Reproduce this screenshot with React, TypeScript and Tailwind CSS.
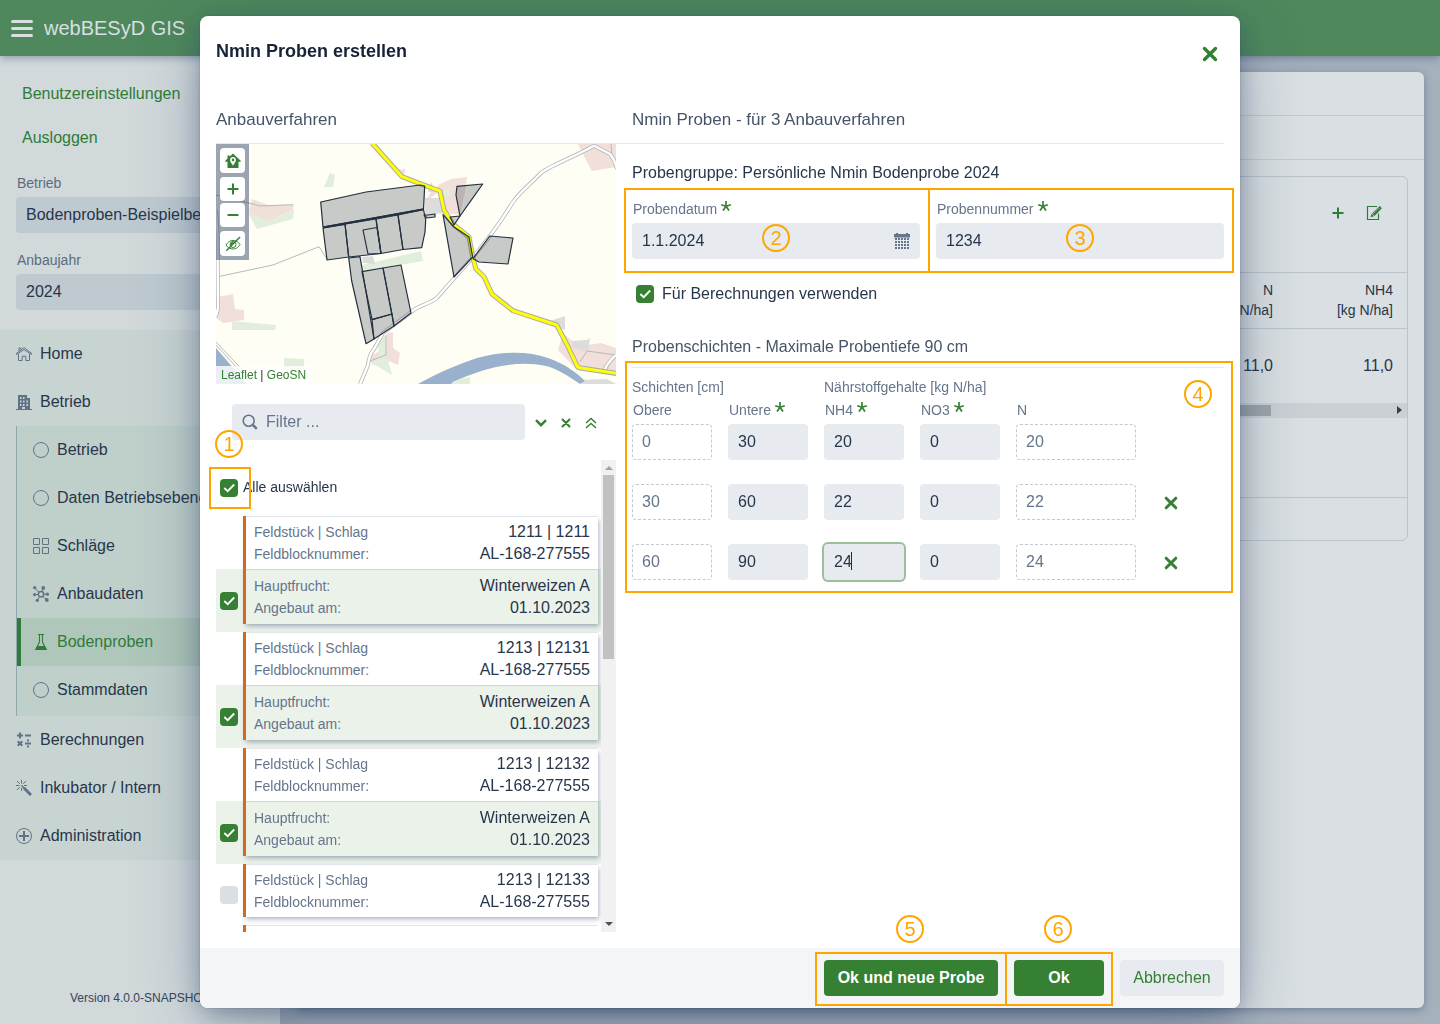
import React, { useState } from 'react';

type IconProps = { className?: string };

/* ---------- icons ---------- */

function CrossIcon({ className = '' }: IconProps) {
  return (
    <svg viewBox="0 0 16 16" className={className} fill="none" stroke="currentColor" strokeWidth="3.400" strokeLinecap="round">
      <path d="M2.500 2.500l11 11M13.500 2.500l-11 11" />
    </svg>
  );
}

function PlusIcon({ className = '' }: IconProps) {
  return (
    <svg viewBox="0 0 12 12" className={className} fill="currentColor">
      <path d="M5 0.5h2v4.500h4.500v2H7v4.500H5V7H0.500V5H5z" />
    </svg>
  );
}

function MinusIcon({ className = '' }: IconProps) {
  return (
    <svg viewBox="0 0 12 12" className={className} fill="currentColor">
      <path d="M0.500 5h11v2h-11z" />
    </svg>
  );
}

function HomeMarkerIcon({ className = '' }: IconProps) {
  return (
    <svg viewBox="0 0 16 16" className={className} fill="currentColor" fillRule="evenodd">
      <path d="M8 0.500l7.700 7.200v1h-2.200V15h-11V8.700H0.300v-1L2.500 5.600V2.500h2.200v1zM8 4a2.900 2.900 0 0 0-2.900 2.900C5.100 8.900 8 12.500 8 12.500s2.900-3.600 2.900-5.600A2.900 2.900 0 0 0 8 4zm0 1.600a1.300 1.300 0 1 1 0 2.600 1.300 1.300 0 0 1 0-2.600z" />
    </svg>
  );
}

function EyeSlashIcon({ className = '' }: IconProps) {
  return (
    <svg viewBox="0 0 16 16" className={className} fill="none" stroke="currentColor">
      <path d="M1 9c2-3.500 4.500-4.500 7-4.500s5 1 7 4c-2 3.500-4.500 4.500-7 4.500s-5-1-7-4z" />
      <path d="M8 5.500a3 3 0 1 0 0 6 3 3 0 0 0 0-6z" />
      <path d="M8.500 6a2.500 2.500 0 0 0-3 3.200c.2.700.6 1.100 1.100 1.300z" fill="currentColor" stroke="none" />
      <path d="M15 1L1.300 14.800" strokeWidth="1.400" />
    </svg>
  );
}

function HomeIcon() {
  return (
    <svg viewBox="0 0 16 16" className="size-4" fill="none" stroke="currentColor">
      <path d="M0.500 8.500V7.300L8 1.600l7.500 5.700v1.200L8 3.600z" />
      <path d="M3 5V2h1.800v1.500M2.500 8v6.500h3.700v-4.200h3.600v4.200h3.700V8" />
    </svg>
  );
}

function BuildingIcon() {
  return (
    <svg viewBox="0 0 16 16" className="size-4" fill="currentColor" fillRule="evenodd">
      <path d="M2 1h9v3h3v11h2v1H0v-1h2zM4 3v2h1.500V3zm3 0v2h1.500V3zM4 6.500v2h1.500v-2zm3 0v2h1.500v-2zm3.500 0v2H12v-2zM4 10v2h1.500v-2zm3 0v2h1.500v-2zm3.500 0v2H12v-2zM6 13v2h3v-2z" />
    </svg>
  );
}

function CircleIcon() {
  return (
    <svg viewBox="0 0 16 16" className="size-4" fill="none" stroke="currentColor">
      <circle cx="8" cy="8" r="7.500" />
    </svg>
  );
}

function GridIcon() {
  return (
    <svg viewBox="0 0 16 16" className="size-4" fill="none" stroke="currentColor">
      <path d="M0.500 0.500h6v6h-6zM9.500 0.500h6v6h-6zM0.500 9.500h6v6h-6zM9.500 9.500h6v6h-6z" />
    </svg>
  );
}

function ClusterIcon() {
  return (
    <svg viewBox="0 0 16 16" className="size-4" fill="none" stroke="currentColor">
      <circle cx="8" cy="8.200" r="2.700" strokeWidth="1.500" />
      <path d="M2 2l4 4.500M10.200 2L9 5.500M5.500 8.500H2M10.500 8.200H14M6.500 10.500l-2 3.500M9.800 10.200l3.900 3.600" />
      <g fill="currentColor" stroke="none">
        <circle cx="1.700" cy="1.700" r="1.600" />
        <circle cx="10.300" cy="1.900" r="1.900" />
        <circle cx="1.600" cy="8.600" r="1.600" />
        <circle cx="14.400" cy="8.200" r="1.600" />
        <circle cx="4.300" cy="14.300" r="1.600" />
        <circle cx="13.800" cy="14" r="1.900" />
      </g>
    </svg>
  );
}

function FlaskIcon() {
  return (
    <svg viewBox="0 0 16 16" className="size-4" fill="none" stroke="currentColor">
      <path d="M5 0.500h6M6.500 1v7L2.800 15.400h10.400L9.500 8V1" strokeWidth="1.100" />
      <path d="M4.300 12h7.400l1.800 3.500h-11z" fill="currentColor" stroke="none" />
    </svg>
  );
}

function CalcIcon() {
  return (
    <svg viewBox="0 0 16 16" className="size-4" fill="none" stroke="currentColor" strokeWidth="2">
      <path d="M1 3.500h6M4 0.500v6M9 3.500h6M9 11.500h6" />
      <path d="M1.700 9.200l4.600 4.600M6.300 9.200l-4.600 4.600" />
      <path d="M11 8.500h2M11 14.500h2" />
    </svg>
  );
}

function WandIcon() {
  return (
    <svg viewBox="0 0 16 16" className="size-4" fill="none" stroke="currentColor">
      <path d="M5.500 0v3.500M5.500 8v3M0 5.500h3.500M8 5.500h3M1 1l2.800 2.800M10 1L7.200 3.800M1 10l2.800-2.800" />
      <path d="M5.500 5.500L9 9" strokeWidth="1.600" />
      <path d="M8 8l7 7" strokeWidth="3" />
    </svg>
  );
}

function PlusCircleIcon() {
  return (
    <svg viewBox="0 0 16 16" className="size-4" fill="none" stroke="currentColor">
      <circle cx="8" cy="8" r="7.500" />
      <path d="M3 8h10M8 3v10" strokeWidth="2" />
    </svg>
  );
}

function EditIcon() {
  return (
    <svg viewBox="0 0 16 16" className="size-4" fill="none" stroke="currentColor">
      <path d="M11 1.500H1.500v13h11V8.500" strokeWidth="1.200" />
      <path d="M13.300 3.600L7.200 9.700" strokeWidth="3.400" />
      <path d="M4.500 12.300l1-3.600 2.600 2.600z" fill="currentColor" stroke="none" />
      <path d="M13 1.800l2.200 2.200" strokeWidth="2" />
      <path d="M12.500 3.200L6.800 8.900" stroke="#d9dfe2" strokeWidth="0.600" />
    </svg>
  );
}

function SearchIcon() {
  return (
    <svg viewBox="0 0 16 16" className="size-4" fill="none" stroke="currentColor">
      <circle cx="6.700" cy="6.700" r="5.500" strokeWidth="1.600" />
      <path d="M10.800 10.800l4 4" strokeWidth="2.400" />
    </svg>
  );
}

function CalendarIcon() {
  return (
    <svg viewBox="0 0 16 16" className="size-4" fill="none" stroke="currentColor">
      <path d="M0 1h2V0h2v1h8V0h2v1h2v3.500H0z" fill="currentColor" stroke="none" />
      <path d="M1 6h14M1 9h14M1 12h14M1 15h14" strokeWidth="2" strokeDasharray="2 1" />
    </svg>
  );
}

/* ---------- shared controls ---------- */

function Checkbox({ id, label, initial = true }: { id: string; label?: string; initial?: boolean }) {
  const [on, setOn] = useState(initial);
  return (
    <span className="grid size-[18px] shrink-0">
      <input
        id={id}
        type="checkbox"
        aria-label={label}
        checked={on}
        onChange={() => setOn(!on)}
        className="col-start-1 row-start-1 size-[18px] appearance-none rounded bg-[#dadfe3] checked:bg-[#358033]"
      />
      {on && (
        <svg viewBox="0 0 18 18" className="pointer-events-none col-start-1 row-start-1 size-[18px]" fill="none" stroke="white" strokeWidth="1.800">
          <path d="M4.300 9l3.400 3.200L14.200 5.500" />
        </svg>
      )}
    </span>
  );
}

function Marker({ n, className }: { n: number; className: string }) {
  return (
    <span className={`pointer-events-none absolute z-10 flex size-7 items-center justify-center rounded-full border-2 border-[#ffa500] text-xl leading-none text-[#ffa500] ${className}`}>
      {n}
    </span>
  );
}

function Frame({ className }: { className: string }) {
  return <span aria-hidden className={`pointer-events-none absolute z-10 border-2 border-[#ffa500] ${className}`} />;
}

function Star() {
  return (
    <svg viewBox="0 0 10 10" className="mb-2 ml-1 inline-block size-2.5" fill="none" stroke="#358033" strokeWidth="1.700">
      <path d="M5 5.200V0M5 5.200L0.200 3.700M5 5.200L9.800 3.700M5 5.200L2 9.600M5 5.200L8 9.600" />
    </svg>
  );
}

/* ---------- background application ---------- */

const mainItems = [
  { label: 'Berechnungen', icon: <CalcIcon /> },
  { label: 'Inkubator / Intern', icon: <WandIcon /> },
  { label: 'Administration', icon: <PlusCircleIcon /> },
];

const subItems = [
  { label: 'Betrieb', icon: <CircleIcon /> },
  { label: 'Daten Betriebsebene', icon: <CircleIcon /> },
  { label: 'Schläge', icon: <GridIcon /> },
  { label: 'Anbaudaten', icon: <ClusterIcon /> },
  { label: 'Bodenproben', icon: <FlaskIcon />, active: true },
  { label: 'Stammdaten', icon: <CircleIcon /> },
];

function NavItem({ label, icon }: { label: string; icon: React.ReactNode }) {
  return (
    <a href="#" className="flex h-12 items-center gap-2 px-4 text-[#27364b]">
      <span className="text-[#627285]">{icon}</span>
      {label}
    </a>
  );
}

function SideField({ id, label, value }: { id: string; label: string; value: string }) {
  return (
    <div className="flex flex-col">
      <label htmlFor={id} className="h-[23px] pl-px text-sm leading-[18px] text-[#5c6c7d]">
        {label}
      </label>
      <select id={id} className="h-9 w-full appearance-none rounded bg-[#becad0] px-2.5 text-[#27364b]">
        <option>{value}</option>
      </select>
    </div>
  );
}

function Sidebar() {
  return (
    <aside className="flex w-[280px] shrink-0 flex-col bg-[#d1d9db] shadow-[1px_0_0_0_#a9b4bf]">
      <nav className="flex flex-col pt-4 pl-[22px] text-[#2f7b3a]">
        <a href="#" className="h-11 leading-[44px]">Benutzereinstellungen</a>
        <a href="#" className="h-11 leading-[44px]">Ausloggen</a>
      </nav>
      <div className="flex flex-col gap-[18px] px-4 pt-3.5 pb-5">
        <SideField id="betrieb" label="Betrieb" value="Bodenproben-Beispielbetrieb" />
        <SideField id="anbaujahr" label="Anbaujahr" value="2024" />
      </div>
      <nav className="flex flex-col bg-[#c8d4d2]">
        <NavItem label="Home" icon={<HomeIcon />} />
        <NavItem label="Betrieb" icon={<BuildingIcon />} />
        <div className="ml-4 border-l border-[#8fa9ab] bg-[#bfd0cb] pb-0.5">
          {subItems.map((item) => (
            <a
              key={item.label}
              href="#"
              className={
                item.active
                  ? 'flex h-12 items-center gap-2 border-l-4 border-[#2f7b3a] bg-[#afc7ba] pl-3 whitespace-nowrap text-[#2f7b3a]'
                  : 'flex h-12 items-center gap-2 pl-4 whitespace-nowrap text-[#27364b]'
              }
            >
              <span className={item.active ? 'text-[#2f7b3a]' : 'text-[#627285]'}>{item.icon}</span>
              {item.label}
            </a>
          ))}
        </div>
        {mainItems.map((item) => (
          <NavItem key={item.label} {...item} />
        ))}
      </nav>
      <p className="mt-auto pb-[18px] text-center text-xs text-[#34445a]">Version 4.0.0-SNAPSHOT</p>
    </aside>
  );
}

function MainPanel() {
  return (
    <main className="flex min-w-0 flex-1 flex-col bg-[#a6b1bd] p-4">
      <div className="flex-1 rounded-md bg-[#d9dfe2] shadow-[0_2px_8px_rgba(35,57,94,0.4)]">
        <div className="h-11 border-b border-[#c2cbd1]" />
        <div className="h-11 border-b border-[#c2cbd1]" />
        <section className="mx-4 mt-4 overflow-hidden rounded-md border border-[#bac4ca] text-[#27364b]">
          <div className="flex h-[95px] items-start justify-end gap-1 pt-5 pr-[17px] text-[#2f7b3a]">
            <button aria-label="Hinzufügen" className="flex size-8 items-center justify-center"><PlusIcon className="size-3" /></button>
            <button aria-label="Bearbeiten" className="flex size-8 items-center justify-center"><EditIcon /></button>
          </div>
          <table className="w-full table-fixed border-t border-[#bac4ca] text-right">
            <thead>
              <tr className="h-14 border-b border-[#bac4ca] text-sm leading-5">
                <th />
                <th className="w-[120px] pr-3.5 pb-0.5 font-normal">N<br />[kg N/ha]</th>
                <th className="w-[120px] pr-3.5 pb-0.5 font-normal">NH4<br />[kg N/ha]</th>
              </tr>
            </thead>
            <tbody>
              <tr className="h-[74px]">
                <td />
                <td className="pr-3.5">11,0</td>
                <td className="pr-3.5">11,0</td>
              </tr>
            </tbody>
          </table>
          <div className="flex h-[15px] items-center justify-end bg-[#cbd0d5] pr-[5px]">
            <span className="mr-[126px] h-[11px] flex-1 bg-[#9ea6ab]" />
            <svg viewBox="0 0 5 8" className="h-2 w-[5px]" fill="#34424e"><path d="M0 0l5 4-5 4z" /></svg>
          </div>
          <div className="h-20 border-b border-[#bac4ca]" />
          <div className="h-[42px]" />
        </section>
      </div>
    </main>
  );
}

/* ---------- map ---------- */

const fields = [
  '104.7,58 150,48 204,41 208.700,42 207.500,65 107,83',
  '107,84 129,80.300 132.700,113 111,116',
  '129,80 160,75 165,109.500 132.700,113',
  '160,75 182,71 187,105.500 165,109.500',
  '182,71 207.500,65.500 209.700,76 209,88 205.700,103.700 187,105.500',
  '132.700,114 144,112.700 158,195 150,199.700 135.700,137',
  '146,127.700 167,124 176,170 156,175.700',
  '167,124 185,121 195,169 178,182',
  '156,175.700 176,170 178,182 158,195',
  '241,42.300 266.700,40 244,72 240,51',
  '234,73 244,72 238,81',
  '227,70.700 238,83 253,93 256.700,113 238,133',
  '273.700,92 297,94 292,120 263,118 257,114.700',
];

const pinkAreas = [
  '33,67 36,55 52,61 78,60.700 77,66 54,77 39,79',
  '2,153 17,150 19,165 28,166 28,176 7,179 0,174',
  '171,189 177,188 177,204 184,209 182,221 170,216',
  '154,213 163,207 170,216 156,221',
  '209,58 215,48 224,40 235,35 251,33 249,48 244,71 230,69 224,47',
  '362,0 400,0 400,23 376,27 369,14',
  '347,189 355,196 371,201 385,199 400,204 400,228 361,226 342,206',
  '182,26 189,25 189,30 183,31',
];

const greenAreas = [
  '32,69 54,77 78,66 77,75 41,85',
  '16,177 60,181 59,186 16,186',
  '68,214 88,215 88,226 68,226',
  '108,43 114,29 119,31 117,43',
  '161,199 170,191 170,209 176,231 156,219 164,212',
  '146,121 159,118 205,107 207,117 167,124 146,128',
  '227,47 233,44 234,52 228,53',
  '234,240 245,235 254,233 254,240',
];

const greyAreas = [
  '209,54 226,54 228,69 209,71',
  '212,48 215,38 220,48',
  '146,113 157,112 159,120 147,119',
  '334,177 349,172 349,186 341,183',
  '356,197 371,196 374,194 372,208 357,204',
  '366,236 391,235 400,240 366,240',
];

function FieldMap() {
  return (
    <div className="relative h-60 overflow-hidden">
      <svg viewBox="0 0 400 240" preserveAspectRatio="xMidYMid slice" className="size-full">
        <rect width="400" height="240" fill="#fefef5" />
        {pinkAreas.map((p) => <polygon key={p} points={p} fill="#f1dfd9" />)}
        {greenAreas.map((p) => <polygon key={p} points={p} fill="#e1eedb" />)}
        {greyAreas.map((p) => <polygon key={p} points={p} fill="#dcdcdc" />)}
        <path d="M202 240C222 229 240 221 261 214C288 207 312 207 332 214C350 220 362 230 369 237L364 240C352 232 342 225 330 222C300 216 270 223 237 238L235 240Z" fill="#99b1cc" />
        <path d="M0 204L31 240H0Z" fill="#99b1cc" />
        <g fill="none" stroke="#b9b9b9">
          <path d="M0 51L33 59L44 62L77 60.700M2 132.700L57 121L103 102.700L111 115M154 217L170 211V191" />
          <path d="M0 201L36 240M0 198L40 240M364 218L371 207L400 211M395 0L396 12" />
        </g>
        {[['#b5b5b8', 4], ['#ffffff', 2.4]].map(([color, width]) => (
          <path
            key={color}
            d="M378 1.700C350 17 330 23 324 30C310 44 303 49 297 58C281 84 270 98 257 113L220.700 154C214 160 200 162 194 169L167 189L158 205Q153 211 152 221L144 240M378 1.700L394 10Q399 16 401 25M0 66L1.500 90L2 164L0 172M388 227Q392 218 400 211"
            fill="none"
            stroke={color}
            strokeWidth={width}
          />
        ))}
        <g fill="none" strokeLinejoin="round">
          {[['#aaaaaa', 5], ['#ffff00', 3]].map(([color, width]) => (
            <path
              key={color}
              d="M156 -1L186 32.700L204 39.700L224 47L228 66L237 80L253 93L256.700 113L260 125L268 132.700L276 150L297 166.700L340.700 181L352 202.700L360.700 221Q361 224 368 224.500L401 229.500"
              stroke={color}
              strokeWidth={width}
            />
          ))}
        </g>
        <g fill="#22303f" fillOpacity="0.250" stroke="#22303f" strokeWidth="1.200" strokeLinejoin="round">
          {fields.map((p) => <polygon key={p} points={p} />)}
          <path d="M147 86L161 83.500L165 109.500L152 110Z" fill="none" />
          <path d="M208 71L211 74L219 73V70L212 71Z" />
          <path d="M107 83.500L208 65.200" strokeWidth="2" />
        </g>
      </svg>
      <div className="absolute top-0 left-0 flex flex-col bg-[#23395e]/45 p-1 text-[#358033]">
        <button aria-label="Übersicht" className="mb-1 flex size-[25px] items-center justify-center rounded bg-white"><HomeMarkerIcon className="size-4" /></button>
        <button aria-label="Vergrößern" className="mb-0.5 flex h-6 w-[25px] items-center justify-center rounded bg-white"><PlusIcon className="size-3" /></button>
        <button aria-label="Verkleinern" className="mb-1 flex h-6 w-[25px] items-center justify-center rounded bg-white"><MinusIcon className="size-3" /></button>
        <button aria-label="Ausblenden" className="flex size-[25px] items-center justify-center rounded bg-white"><EyeSlashIcon className="size-4" /></button>
      </div>
      <p className="absolute bottom-0 left-0 bg-white/80 px-[5px] text-xs leading-[18px] text-[#333]">
        <a href="#" className="text-[#358033]">Leaflet</a> | <a href="#" className="text-[#358033]">GeoSN</a>
      </p>
    </div>
  );
}

/* ---------- list of fields ---------- */

const plots = [
  { id: '1211 | 1211', crop: true },
  { id: '1213 | 12131', crop: true },
  { id: '1213 | 12132', crop: true },
  { id: '1213 | 12133', crop: false },
];

function PlotRow({ label, value }: { label: string; value: string }) {
  return (
    <div className="flex h-[22px] items-center justify-between">
      <dt className="text-sm text-[#65758b]">{label}</dt>
      <dd>{value}</dd>
    </div>
  );
}

function PlotCard({ id, crop }: { id: string; crop: boolean }) {
  return (
    <li className={crop ? 'flex bg-[linear-gradient(to_bottom,#fff_53px,#ebf2ea_53px)]' : 'flex'}>
      <div className={crop ? 'flex w-[27px] shrink-0 flex-col pt-[76px] pl-1' : 'flex w-[27px] shrink-0 flex-col pt-[22px] pl-1'}>
        <Checkbox id={`plot-${id}`} label={id} initial={crop} />
      </div>
      <div className="mr-[3px] mb-2 min-w-0 flex-1 border-l-[3px] border-[#d2691e] shadow-[2px_3px_5px_-1px_rgba(35,57,94,0.4)]">
        <dl className="h-[53px] border-t border-[#e2e6ea] bg-white px-2 pt-1">
          <PlotRow label="Feldstück | Schlag" value={id} />
          <PlotRow label="Feldblocknummer:" value="AL-168-277555" />
        </dl>
        {crop && (
          <dl className="h-[55px] border-t border-[#cbd8d3] bg-[#ebf2ea] px-2 pt-[5px]">
            <PlotRow label="Hauptfrucht:" value="Winterweizen A" />
            <PlotRow label="Angebaut am:" value="01.10.2023" />
          </dl>
        )}
      </div>
    </li>
  );
}

function PlotList() {
  return (
    <div className="relative mb-4 flex min-h-0 flex-1 text-[#27364b]">
      <div className="flex min-w-0 flex-1 flex-col overflow-hidden">
        <div className="flex h-14 shrink-0 items-center gap-[5px] pl-1 text-sm">
          <Checkbox id="all" />
          <label htmlFor="all" className="pb-0.5">Alle auswählen</label>
        </div>
        <ul>
          {plots.map((plot) => <PlotCard key={plot.id} {...plot} />)}
        </ul>
        <div className="mr-[3px] ml-[27px] flex-1 border-l-[3px] border-[#d2691e]">
          <div className="border-t border-[#e2e6ea]" />
        </div>
      </div>
      <div className="flex w-[15px] flex-col items-center bg-[#f1f1f1] pt-1.5 pb-1.5">
        <svg viewBox="0 0 8 4" className="h-1 w-2" fill="#a3a3a3"><path d="M0 4l4-4 4 4z" /></svg>
        <span className="mt-[5px] h-[184px] w-[11px] bg-[#c1c1c1]" />
        <svg viewBox="0 0 8 4" className="mt-auto h-1 w-2" fill="#505050"><path d="M0 0l4 4 4-4z" /></svg>
      </div>
      <Frame className="top-[7px] -left-[7px] size-[42px]" />
      <Marker n={1} className="-top-[30px] -left-px" />
    </div>
  );
}

function LeftColumn() {
  return (
    <section className="flex min-h-0 w-[400px] shrink-0 flex-col">
      <FieldMap />
      <div className="my-5 flex h-9 items-center pl-4">
        <label className="flex h-9 min-w-0 flex-1 items-center gap-2 rounded bg-[#e7eaee] px-2.5 text-[#65758b]">
          <SearchIcon />
          <input aria-label="Filter" placeholder="Filter ..." className="min-w-0 flex-1 bg-transparent outline-none placeholder:text-[#65758b]" />
        </label>
        <div className="flex items-center pt-0.5 pr-[13px] pl-[3px] text-[#358033]">
          <button aria-label="Ausklappen" className="flex w-[25px] justify-center">
            <svg viewBox="0 0 12 8" className="h-2 w-3" fill="none" stroke="currentColor" strokeWidth="2.400"><path d="M1 1.200l5 5 5-5" /></svg>
          </button>
          <button aria-label="Zurücksetzen" className="flex w-[25px] justify-center"><CrossIcon className="size-2.5" /></button>
          <button aria-label="Einklappen" className="flex w-[25px] justify-center">
            <svg viewBox="0 0 12 12" className="size-3" fill="none" stroke="currentColor" strokeWidth="1.400"><path d="M1 6l5-4.500L11 6M1 11l5-4.500 5 4.500" /></svg>
          </button>
        </div>
      </div>
      <PlotList />
    </section>
  );
}

/* ---------- form ---------- */

const inputClass = 'h-9 w-full rounded bg-[#e7eaee] px-2.5 text-[#27364b] outline-none';
const readOnlyClass = 'h-9 w-full rounded border border-dashed border-[#c2c9d1] px-[9px] text-[#65758b] outline-none';

const layers = [
  { from: 0, to: 30, nh4: 20, n: 20 },
  { from: 30, to: 60, nh4: 22, n: 22 },
  { from: 60, to: 90, nh4: 24, n: 24 },
];

function SampleForm() {
  return (
    <form className="min-w-0 flex-1 text-[#27364b]" onSubmit={(e) => e.preventDefault()}>
      <p className="pt-[17px] leading-6">Probengruppe: Persönliche Nmin Bodenprobe 2024</p>
      <div className="mt-[15px] grid grid-cols-2 gap-4">
        <div className="relative">
          <label htmlFor="date" className="block h-[23px] pl-px text-sm leading-[18px] text-[#65758b]">Probendatum<Star /></label>
          <div className="flex h-9 items-center rounded bg-[#e7eaee] pr-2.5 text-[#65758b]">
            <input id="date" defaultValue="1.1.2024" className={inputClass} />
            <button type="button" aria-label="Kalender öffnen"><CalendarIcon /></button>
          </div>
          <Frame className="-top-3 -right-2.5 -bottom-3.5 -left-2" />
          <Marker n={2} className="top-6 left-[130px]" />
        </div>
        <div className="relative">
          <label htmlFor="number" className="block h-[23px] pl-px text-sm leading-[18px] text-[#65758b]">Probennummer<Star /></label>
          <input id="number" defaultValue="1234" className={inputClass} />
          <Frame className="-top-3 -right-2.5 -bottom-3.5 -left-2" />
          <Marker n={3} className="top-6 left-[130px]" />
        </div>
      </div>
      <div className="mt-6 flex h-[22px] items-center gap-2 pl-1">
        <Checkbox id="use" />
        <label htmlFor="use">Für Berechnungen verwenden</label>
      </div>
      <h3 className="mt-7 leading-7 text-[#455468]">Probenschichten - Maximale Probentiefe 90 cm</h3>
      <fieldset className="relative mt-1.5 border-t border-[#e7eaee] pt-2">
        <div className="grid grid-cols-[80px_80px_80px_80px_120px_36px] gap-x-4 text-sm text-[#65758b]">
          <span className="col-span-2 h-[22px] leading-[22px]">Schichten [cm]</span>
          <span className="col-span-4 h-[22px] leading-[22px]">Nährstoffgehalte [kg N/ha]</span>
          <span className="h-[26px] pl-px leading-6">Obere</span>
          <span className="h-[26px] pl-px leading-6">Untere<Star /></span>
          <span className="h-[26px] pl-px leading-6">NH4<Star /></span>
          <span className="h-[26px] pl-px leading-6">NO3<Star /></span>
          <span className="h-[26px] pl-px leading-6">N</span>
        </div>
        <div className="flex flex-col gap-6">
          {layers.map((layer, i) => (
            <div key={layer.from} className="grid grid-cols-[80px_80px_80px_80px_120px_38px] items-center gap-x-4">
              <input aria-label="Obere" readOnly defaultValue={layer.from} className={readOnlyClass} />
              <input aria-label="Untere" defaultValue={layer.to} className={inputClass} />
              <div className="relative">
                <input
                  aria-label="NH4"
                  defaultValue={layer.nh4}
                  className={i === 2 ? `${inputClass} shadow-[0_0_0_2px_#9abf99]` : inputClass}
                />
                {i === 2 && <span className="absolute top-2 left-[27px] h-[18px] w-px bg-[#1b2b41]" />}
              </div>
              <input aria-label="NO3" defaultValue={0} className={inputClass} />
              <input aria-label="N" readOnly defaultValue={layer.n} className={readOnlyClass} />
              {i > 0 && (
                <button type="button" aria-label="Schicht entfernen" className="flex h-9 items-center justify-center pt-0.5 text-[#358033]">
                  <CrossIcon className="size-3.5" />
                </button>
              )}
            </div>
          ))}
        </div>
        <Frame className="-top-[7px] -right-[9px] -bottom-[13px] -left-[7px]" />
        <Marker n={4} className="top-3 right-3" />
      </fieldset>
    </form>
  );
}

/* ---------- dialog ---------- */

function Dialog() {
  return (
    <div className="fixed inset-0 flex justify-center p-4">
      <div
        role="dialog"
        aria-labelledby="dialog-title"
        className="flex w-full max-w-[1040px] flex-col overflow-hidden rounded-lg bg-white shadow-[0_0_0_1px_rgba(35,57,94,0.08),0_6px_24px_-3px_rgba(35,57,94,0.42),0_18px_64px_-8px_rgba(35,57,94,0.42)]"
      >
        <header className="flex h-[76px] shrink-0 items-center justify-between px-4">
          <h2 id="dialog-title" className="pb-1.5 text-lg font-bold text-[#182436]">Nmin Proben erstellen</h2>
          <button aria-label="Schließen" className="flex size-7 items-center justify-center text-[#358033]">
            <CrossIcon className="size-4" />
          </button>
        </header>
        <div className="mx-4 flex h-[52px] shrink-0 gap-4 border-b border-[#e4e7eb] pt-4 text-[17px] leading-6 text-[#455468]">
          <h3 className="w-[400px] shrink-0">Anbauverfahren</h3>
          <h3>Nmin Proben - für 3 Anbauverfahren</h3>
        </div>
        <div className="flex min-h-0 flex-1 gap-4 px-4">
          <LeftColumn />
          <SampleForm />
        </div>
        <footer className="flex h-[60px] shrink-0 items-center justify-end gap-4 bg-[#f3f5f7] px-4">
          <div className="relative">
            <button className="h-9 w-[174px] rounded bg-[#358033] font-bold text-white">Ok und neue Probe</button>
            <Frame className="-top-2 -right-[9px] -bottom-2.5 -left-[9px]" />
            <Marker n={5} className="-top-[45px] left-[72px]" />
          </div>
          <div className="relative">
            <button className="h-9 w-[90px] rounded bg-[#358033] font-bold text-white">Ok</button>
            <Frame className="-top-2 -right-[9px] -bottom-2.5 -left-[9px]" />
            <Marker n={6} className="-top-[45px] left-[30px]" />
          </div>
          <button className="h-9 w-[104px] rounded bg-[#e7eaee] text-[#358033]">Abbrechen</button>
        </footer>
      </div>
    </div>
  );
}

export default function App() {
  return (
    <div className="flex min-h-screen flex-col bg-[#a6b1bd] font-['Liberation_Sans',Arial,sans-serif] text-base">
      <header className="z-10 flex h-14 shrink-0 items-center gap-[11px] bg-[#4f885d] px-[11px] text-[#d9dfe2] shadow-[0_2px_8px_rgba(35,57,94,0.4)]">
        <button aria-label="Menü" className="flex w-[22px] flex-col gap-1">
          <span className="h-[3px] rounded bg-current" />
          <span className="h-[3px] rounded bg-current" />
          <span className="h-[3px] rounded bg-current" />
        </button>
        <h1 className="text-xl">webBESyD GIS</h1>
      </header>
      <div className="flex flex-1">
        <Sidebar />
        <MainPanel />
      </div>
      <div className="relative z-20">
        <Dialog />
      </div>
    </div>
  );
}
